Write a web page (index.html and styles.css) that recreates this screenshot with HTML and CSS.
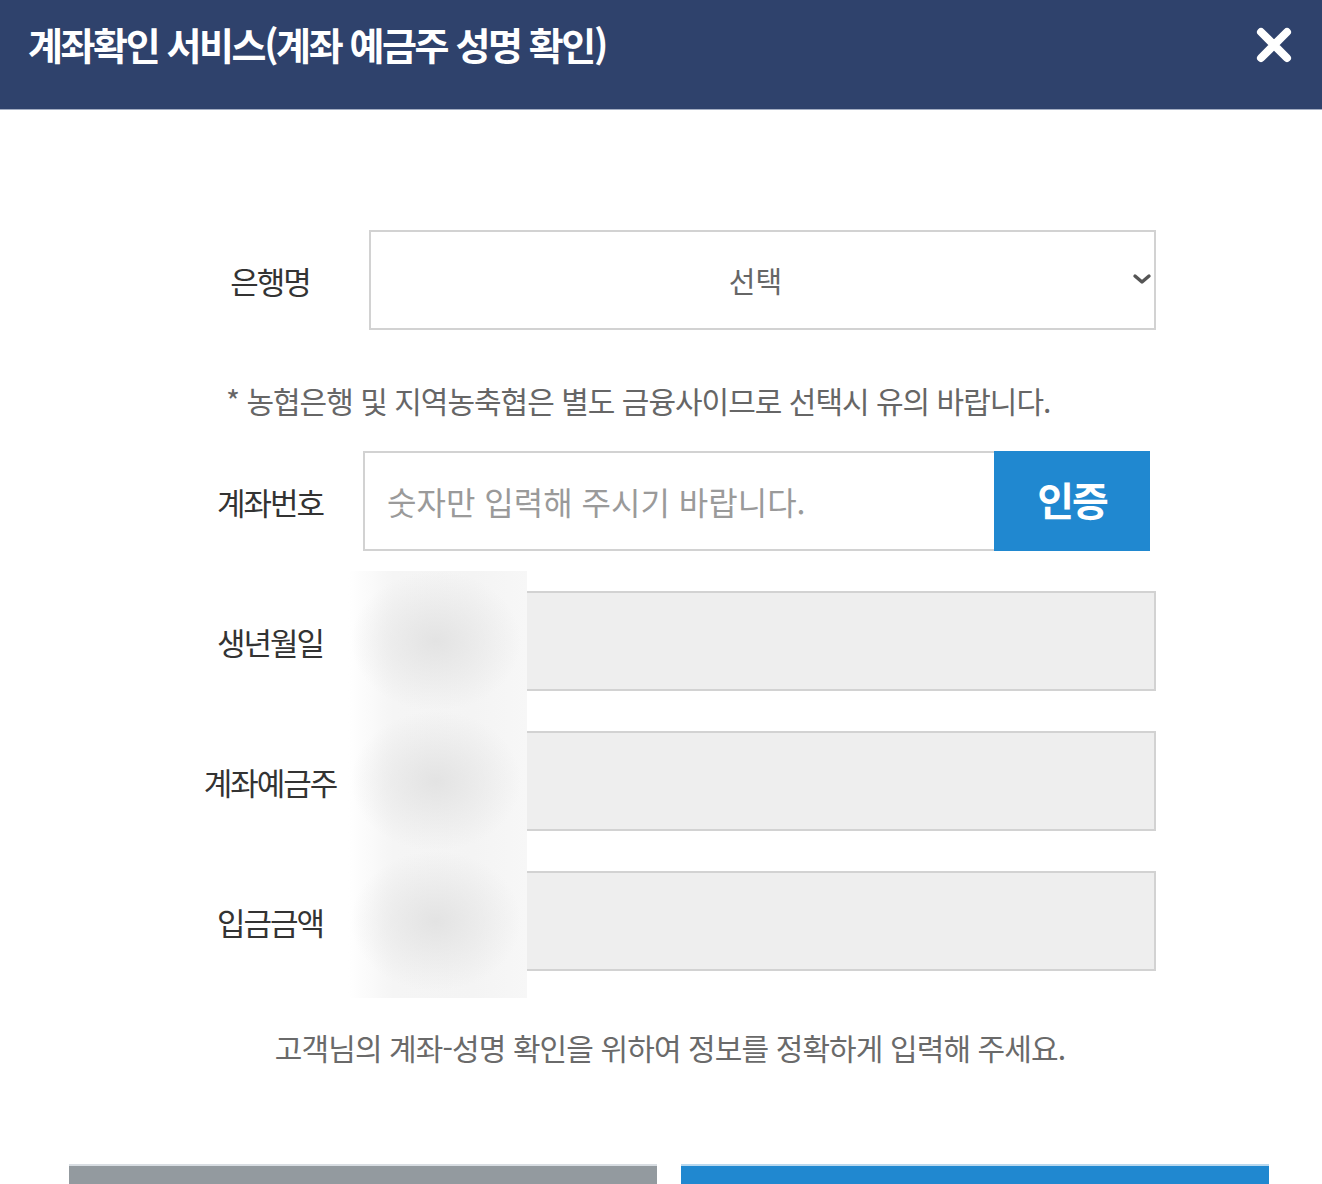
FILE: index.html
```html
<!DOCTYPE html>
<html lang="ko">
<head>
<meta charset="utf-8">
<title>계좌확인 서비스</title>
<link rel="stylesheet" href="styles.css">
</head>
<body>
<header class="top">
  <h1 class="title">계좌확인 서비스(계좌 예금주 성명 확인)</h1>
  <button class="close" type="button" aria-label="닫기">
    <svg viewBox="0 0 40 40" width="40" height="40"><path d="M7 7 L33 33 M33 7 L7 33" stroke="#fff" stroke-width="8" stroke-linecap="round" fill="none"/></svg>
  </button>
</header>
<main class="form">
  <div class="row">
    <span class="label">은행명</span>
    <div class="select">
      <span class="select-text">선택</span>
      <svg class="chevron" viewBox="0 0 20 12" width="20" height="12"><path d="M3 3 L10 9 L17 3" stroke="#555" stroke-width="3.4" fill="none" stroke-linecap="round" stroke-linejoin="round"/></svg>
    </div>
  </div>
  <p class="note">* 농협은행 및 지역농축협은 별도 금융사이므로 선택시 유의 바랍니다.</p>
  <div class="stack">
    <div class="row">
      <span class="label">계좌번호</span>
      <div class="group">
        <input class="account" type="text" placeholder="숫자만 입력해 주시기 바랍니다.">
        <button class="verify" type="button">인증</button>
      </div>
    </div>
    <div class="masked">
      <div class="row">
        <span class="label">생년월일</span>
        <div class="field"></div>
      </div>
      <div class="row">
        <span class="label">계좌예금주</span>
        <div class="field"></div>
      </div>
      <div class="row">
        <span class="label">입금금액</span>
        <div class="field"></div>
      </div>
      <div class="blur"></div>
    </div>
  </div>
  <p class="guide">고객님의 계좌-성명 확인을 위하여 정보를 정확하게 입력해 주세요.</p>
</main>
<div class="actions">
  <button class="btn btn-gray" type="button"></button>
  <button class="btn btn-blue" type="button"></button>
</div>
</body>
</html>
```

FILE: styles.css
```css
body {
  margin: 0;
  background: #fff;
  font-family: "Noto Sans CJK KR", "Noto Sans", sans-serif;
}

.top {
  height: 110px;
  box-sizing: border-box;
  background: #2f426c;
  border-bottom: 1px solid #a3adc2;
  display: flex;
  align-items: flex-start;
  justify-content: space-between;
  padding: 0 28px 0 28px;
}

.title {
  margin: 0;
  height: 88px;
  line-height: 88px;
  color: #fff;
  font-size: 38px;
  font-weight: 700;
  letter-spacing: -2.4px;
  white-space: nowrap;
}

.close {
  margin-top: 25px;
  width: 40px;
  height: 40px;
  padding: 0;
  border: 0;
  background: none;
}

.close svg {
  display: block;
}

.form {
  padding: 120px 0 0 180px;
  width: 976px;
}

.row {
  display: grid;
  grid-template-columns: 180px 1fr;
  align-items: center;
  height: 100px;
}

.label {
  text-align: center;
  font-size: 31px;
  letter-spacing: -2px;
  color: #333;
  white-space: nowrap;
}

.select {
  position: relative;
  margin-left: 9px;
  height: 100px;
  box-sizing: border-box;
  border: 2px solid #d2d2d2;
  display: flex;
  align-items: center;
  justify-content: center;
}

.select-text {
  font-size: 29px;
  letter-spacing: 0;
  color: #666;
  margin-left: -14px;
}

.chevron {
  position: absolute;
  right: 2px;
  top: 41px;
}

.note {
  margin: 50px 0 31px 46px;
  height: 40px;
  line-height: 40px;
  font-size: 30px;
  letter-spacing: -1px;
  color: #666;
  white-space: nowrap;
}

.stack {
  display: flex;
  flex-direction: column;
  gap: 40px;
}

.group {
  display: flex;
  height: 100px;
  margin-left: 3px;
  margin-right: 6px;
}

.account {
  flex: 1;
  min-width: 0;
  box-sizing: border-box;
  height: 100px;
  margin: 0;
  border: 2px solid #d2d2d2;
  border-right: 0;
  padding: 0 0 0 22px;
  font-family: inherit;
  font-size: 32px;
  color: #333;
  outline: none;
}

.account::placeholder {
  color: #9a9a9a;
}

.verify {
  width: 156px;
  height: 100px;
  border: 0;
  margin: 0;
  background: #2088d0;
  color: #fff;
  font-family: inherit;
  font-size: 40px;
  font-weight: 700;
  letter-spacing: -2px;
  padding: 0 0 4px;
}

.masked {
  position: relative;
  display: flex;
  flex-direction: column;
  gap: 40px;
}

.field {
  margin-left: 3px;
  height: 100px;
  box-sizing: border-box;
  background: #eeeeee;
  border: 2px solid #d2d2d2;
}

.blur {
  position: absolute;
  left: 168px;
  top: -20px;
  width: 179px;
  height: 427px;
  background:
    radial-gradient(ellipse 85px 70px at 88px 70px, #e3e3e3, rgba(240,240,240,0) 100%),
    radial-gradient(ellipse 85px 70px at 88px 210px, #e3e3e3, rgba(240,240,240,0) 100%),
    radial-gradient(ellipse 85px 70px at 88px 350px, #e3e3e3, rgba(240,240,240,0) 100%),
    linear-gradient(to right, #ffffff, #f5f5f5 25%, #f4f4f4 70%, #f7f7f7);
}

.guide {
  margin: 56px 0 0 -180px;
  padding-left: 18px;
  box-sizing: border-box;
  width: 1322px;
  height: 40px;
  line-height: 40px;
  text-align: center;
  font-size: 30px;
  letter-spacing: -0.9px;
  color: #6a6a6a;
  white-space: nowrap;
}

.actions {
  display: flex;
  gap: 24px;
  margin: 97px 0 0 69px;
}

.btn {
  width: 588px;
  height: 100px;
  border: 0;
  border-top: 2px solid #d8dde2;
  padding: 0;
}

.btn-gray {
  background: #939a9f;
}

.btn-blue {
  background: #2088d0;
  border-top-color: #b8d8ef;
}
```
